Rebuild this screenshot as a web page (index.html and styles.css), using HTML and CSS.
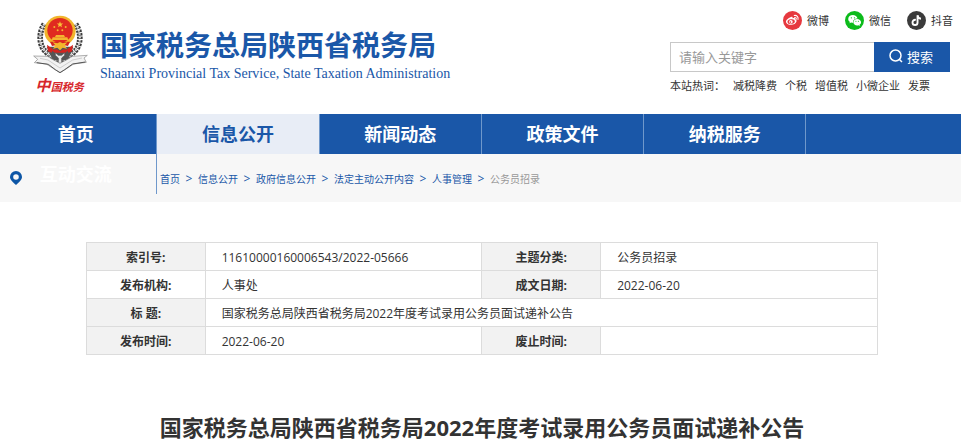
FILE: index.html
```html
<!DOCTYPE html>
<html lang="zh-CN">
<head>
  <meta charset="UTF-8">
  <meta name="viewport" content="width=device-width, initial-scale=1.0">
  <title>国家税务总局陕西省税务局2022年度考试录用公务员面试递补公告</title>
  <link rel="stylesheet" href="styles.css">
</head>
<body>

  <header class="header">
    <a href="#" class="logo">
      <svg class="emblem" viewBox="36 42 168 246" aria-hidden="true">
        <!-- wreath -->
        <g fill="none" stroke="#3c3c3c" stroke-width="17" stroke-dasharray="7 3">
          <path d="M73 72C54 100 58 138 76 154C90 168 104 176 118 180"/>
          <path d="M167 72C186 100 182 138 164 154C150 168 136 176 122 180"/>
        </g>
        <g fill="none" stroke="#dedede" stroke-width="6" stroke-dasharray="5 5">
          <path d="M73 72C54 100 58 138 76 154C90 168 104 176 118 180"/>
          <path d="M167 72C186 100 182 138 164 154C150 168 136 176 122 180"/>
        </g>
        <path fill="#555" d="M80 140h80l-16 40h-46z"/>
        <path fill="#d5241f" d="M81 134l18 14-4 10-11-4zM159 134l-18 14 4 10 11-4z"/>
        <!-- national emblem -->
        <ellipse cx="120" cy="93" rx="47" ry="46" fill="#f2b52c"/>
        <ellipse cx="120" cy="91" rx="38" ry="37" fill="#e02a20"/>
        <path fill="#f8c536" d="M120 64l2.500 6.500h7l-5.500 4.500 2 7-6-4-6 4 2-7-5.500-4.500h7z"/>
        <g fill="#f3b52f">
          <circle cx="103" cy="81" r="3"/>
          <circle cx="137" cy="81" r="3"/>
          <circle cx="113" cy="91" r="3"/>
          <circle cx="127" cy="91" r="3"/>
          <path d="M108 105h24l3 6h-30zM98 112h44l3 8H95z"/>
        </g>
        <path fill="#d5241f" d="M90 125h60l-6 13-14-3-10 5-10-5-14 3z"/>
        <path fill="#f2b52c" d="M98 127l14 3 8-4 8 4 14-3-8 9 7 10-13-3-8 8-8-8-13 3 7-10z"/>
        <path fill="#d5241f" d="M94 150l16-2 10 6 10-6 16 2-10 8h-32z"/>
        <!-- sword handle and ribbon -->
        <path fill="#e8e8e8" stroke="#555" stroke-width="2" d="M106 158l9 8h10l9-8v8l-9 8v16h-10v-16l-9-8z"/>
        <path fill="#f2f2f2" stroke="#888" stroke-width="2" d="M41 168l42 1 14 9 23 12 23-12 14-9 45-3-10 8 7 13-38 5-26 17-15 9-15-9-26-17-36-4 10-10z"/>
        <path fill="none" stroke="#555" stroke-width="3" d="M50 188l35 5 21 16 14 9 14-9 24-17 38-6"/>
        <path fill="none" stroke="#bbb" stroke-width="2" d="M60 175l24 5 36 24 38-24 28-6"/>
        <text class="seal" x="46" y="272"><tspan class="seal-big">中</tspan>国税务</text>
      </svg>
      <span class="logo-text">
        <strong>国家税务总局陕西省税务局</strong>
        <span class="logo-en">Shaanxi Provincial Tax Service, State Taxation Administration</span>
      </span>
    </a>

    <div class="header-right">
      <ul class="social">
        <li><a href="#">
          <svg viewBox="0 0 20 20" aria-hidden="true">
            <circle cx="10" cy="10" r="10" fill="#e6393f"/>
            <path fill="#fff" d="M8.600 6.200c1-.3 1.700.1 1.500 1.400 1.800-.6 3.100-.2 2.600 1.200 1.200.4 1.800 1.200 1.500 2.200-.5 2.100-3 3.500-5.700 3.500-2.900 0-5.400-1.300-5.400-3.300 0-1.800 3.200-4.600 5.500-5z"/>
            <ellipse cx="8.600" cy="11.200" rx="3.900" ry="2.500" fill="#e6393f" transform="rotate(-8 8.600 11.200)"/>
            <circle cx="8.300" cy="11.400" r="1.900" fill="#fff"/>
            <circle cx="7.800" cy="11.700" r=".8" fill="#e6393f"/>
            <path fill="none" stroke="#fff" stroke-width="1.100" stroke-linecap="round" d="M11.800 4.700c2.700-.5 4.600 1.600 4 4.200M12.200 6.800c1.200-.2 2 .7 1.700 1.800"/>
          </svg>
          微博</a></li>
        <li><a href="#">
          <svg viewBox="0 0 20 20" aria-hidden="true">
            <circle cx="10" cy="10" r="10" fill="#0cbb1b"/>
            <path fill="#fff" d="M8.300 4.300c-2.700 0-4.900 1.700-4.900 4 0 1.300.7 2.400 1.800 3.100l-.5 1.500 1.800-.9c.7.200 1.300.3 2 .3-.4-2.700 1.900-4.600 4.700-4.500-.5-2-2.500-3.500-4.900-3.500z"/>
            <path fill="#fff" d="M12.800 8.400c-2.300 0-4 1.500-4 3.400 0 2 1.800 3.400 4 3.400.5 0 1-.1 1.400-.2l1.500.8-.4-1.300c1-.7 1.600-1.600 1.600-2.700 0-1.900-1.900-3.400-4.100-3.400z"/>
            <g fill="#0cbb1b"><circle cx="6.700" cy="7.200" r=".7"/><circle cx="10" cy="7.200" r=".7"/><circle cx="11.500" cy="10.800" r=".6"/><circle cx="14.100" cy="10.800" r=".6"/></g>
          </svg>
          微信</a></li>
        <li><a href="#">
          <svg viewBox="0 0 20 20" aria-hidden="true">
            <circle cx="10" cy="10" r="10" fill="#3b3b3b"/>
            <path fill="none" stroke="#fff" stroke-width="2" d="M9.300 9.300C7 9 5.800 10.500 5.800 12c0 1.600 1.200 2.700 2.700 2.700s2.600-1.100 2.600-2.700V4.400c.2 2.200 1.500 3.500 3.600 3.700"/>
          </svg>
          抖音</a></li>
      </ul>

      <form class="search" action="#">
        <input type="text" class="search-input" placeholder="请输入关键字" aria-label="请输入关键字">
        <button type="submit" class="search-button">
          <svg viewBox="0 0 14 14" aria-hidden="true"><circle cx="6.500" cy="6.500" r="5.500"/><path d="M10.500 10.500l2.500 2.500"/></svg>
          搜索
        </button>
      </form>

      <div class="hot-words">
        <span>本站热词：</span>
        <a href="#">减税降费</a>
        <a href="#">个税</a>
        <a href="#">增值税</a>
        <a href="#">小微企业</a>
        <a href="#">发票</a>
      </div>
    </div>
  </header>

  <nav class="nav">
    <ul>
      <li><a href="#">首页</a></li>
      <li><a href="#" class="active">信息公开</a></li>
      <li><a href="#">新闻动态</a></li>
      <li><a href="#">政策文件</a></li>
      <li><a href="#">纳税服务</a></li>
      <li><a href="#">互动交流</a></li>
    </ul>
  </nav>

  <div class="breadcrumb">
    <svg class="pin" viewBox="0 0 12 14" aria-hidden="true">
      <path fill="#0d56a6" fill-rule="evenodd" d="M6 0a6 6 0 0 1 6 6c0 3-3 5-6 8-3-3-6-5-6-8a6 6 0 0 1 6-6zm0 3.200a2.800 2.800 0 1 0 0 5.600 2.800 2.800 0 0 0 0-5.600z"/>
    </svg>
    <a href="#">首页</a><i>&gt;</i>
    <a href="#">信息公开</a><i>&gt;</i>
    <a href="#">政府信息公开</a><i>&gt;</i>
    <a href="#">法定主动公开内容</a><i>&gt;</i>
    <a href="#">人事管理</a><i>&gt;</i>
    <span>公务员招录</span>
  </div>

  <main class="content">
    <table class="info">
      <tr>
        <th scope="row">索引号:</th>
        <td>11610000160006543/2022-05666</td>
        <th scope="row">主题分类:</th>
        <td>公务员招录</td>
      </tr>
      <tr>
        <th scope="row" class="plain">发布机构:</th>
        <td>人事处</td>
        <th scope="row">成文日期:</th>
        <td>2022-06-20</td>
      </tr>
      <tr>
        <th scope="row">标 题:</th>
        <td colspan="3">国家税务总局陕西省税务局2022年度考试录用公务员面试递补公告</td>
      </tr>
      <tr>
        <th scope="row">发布时间:</th>
        <td>2022-06-20</td>
        <th scope="row">废止时间:</th>
        <td></td>
      </tr>
    </table>

    <h1>国家税务总局陕西省税务局2022年度考试录用公务员面试递补公告</h1>
  </main>

</body>
</html>
```

FILE: styles.css
```css
:root {
  --blue: #1a57a8;
  --text: #333;
  --line: #dcdcdc;
}

* {
  box-sizing: border-box;
}

body {
  margin: 0;
  background: #fff;
  color: var(--text);
  font-family: "Open Sans", "Noto Sans CJK SC", sans-serif;
  font-size: 12px;
}

a {
  color: inherit;
  text-decoration: none;
}

ul {
  list-style: none;
  margin: 0;
  padding: 0;
}

/* Header */
.header {
  display: flex;
  justify-content: space-between;
  align-items: flex-start;
  padding: 10px 8px 0 32px;
  height: 114px;
}

.logo {
  display: flex;
  gap: 12px;
  padding-top: 4px;
  color: var(--blue);
}

.emblem {
  width: 56px;
  height: 82px;
}

.seal {
  fill: #d7262b;
  font-size: 33px;
  font-weight: bold;
  font-style: italic;
}

.seal-big {
  font-size: 46px;
}

.logo-text {
  display: flex;
  flex-direction: column;
  padding-top: 11px;
}

.logo-text strong {
  font-size: 28px;
  line-height: 40px;
}

.logo-en {
  font-family: "Liberation Serif", serif;
  font-size: 14px;
  line-height: 18px;
}

.social {
  display: flex;
  justify-content: flex-end;
  gap: 16px;
  font-size: 11px;
}

.social a {
  display: flex;
  align-items: center;
  gap: 5px;
  height: 20px;
}

.social svg {
  width: 19px;
  height: 19px;
}

.search {
  display: flex;
  width: 280px;
  height: 30px;
  margin: 12px 3px 0 0;
}

.search-input {
  flex: 1;
  min-width: 0;
  padding: 0 8px;
  border: 1px solid #c8c8c8;
  border-right: 0;
  font: inherit;
  font-size: 13px;
}

.search-input::placeholder {
  color: #999;
}

.search-button {
  display: flex;
  align-items: center;
  justify-content: center;
  gap: 4px;
  width: 76px;
  padding: 0 2px 2px 0;
  border: 0;
  background: var(--blue);
  color: #fff;
  font: inherit;
  font-size: 13px;
}

.search-button svg {
  width: 14px;
  height: 14px;
  fill: none;
  stroke: #fff;
  stroke-width: 1.5;
}

.hot-words {
  display: flex;
  gap: 8px;
  margin-top: 4px;
  font-size: 11px;
  line-height: 20px;
}

/* Main navigation */
.nav {
  position: relative;
  z-index: 1;
  height: 40px;
  background: var(--blue);
}

.nav ul {
  display: flex;
  flex-wrap: wrap;
  margin-left: -5px;
}

.nav li {
  width: 16.8%;
  border-right: 1px solid #6f98cb;
}

.nav a {
  display: block;
  color: #fff;
  font-size: 18px;
  font-weight: bold;
  line-height: 40px;
  text-align: center;
}

.nav a.active {
  background: #e8edf6;
  color: var(--blue);
}

/* Breadcrumb */
.breadcrumb {
  display: flex;
  align-items: center;
  height: 48px;
  padding: 0 10px;
  background: #f7f7f7;
  color: var(--blue);
  font-size: 10px;
}

.pin {
  width: 12px;
  height: 14px;
  margin-right: 138px;
}

.breadcrumb i {
  width: 18px;
  font-size: 12px;
  font-style: normal;
  text-align: center;
}

.breadcrumb span {
  color: #999;
}

/* Document */
.content {
  padding: 40px 83px 0 86px;
}

.info {
  width: 100%;
  border-collapse: collapse;
  table-layout: fixed;
}

.info th,
.info td {
  height: 28px;
  padding: 2px 16px 0;
  border: 1px solid var(--line);
  line-height: 20px;
}

.info th {
  width: 15%;
  padding: 2px 0 0;
  background: #f2f2f2;
  text-align: center;
}

.info td {
  width: 35%;
}

.info th.plain {
  background: #fff;
}

h1 {
  margin: 56px 0 0;
  font-size: 22px;
  line-height: 32px;
  text-align: center;
}
```
